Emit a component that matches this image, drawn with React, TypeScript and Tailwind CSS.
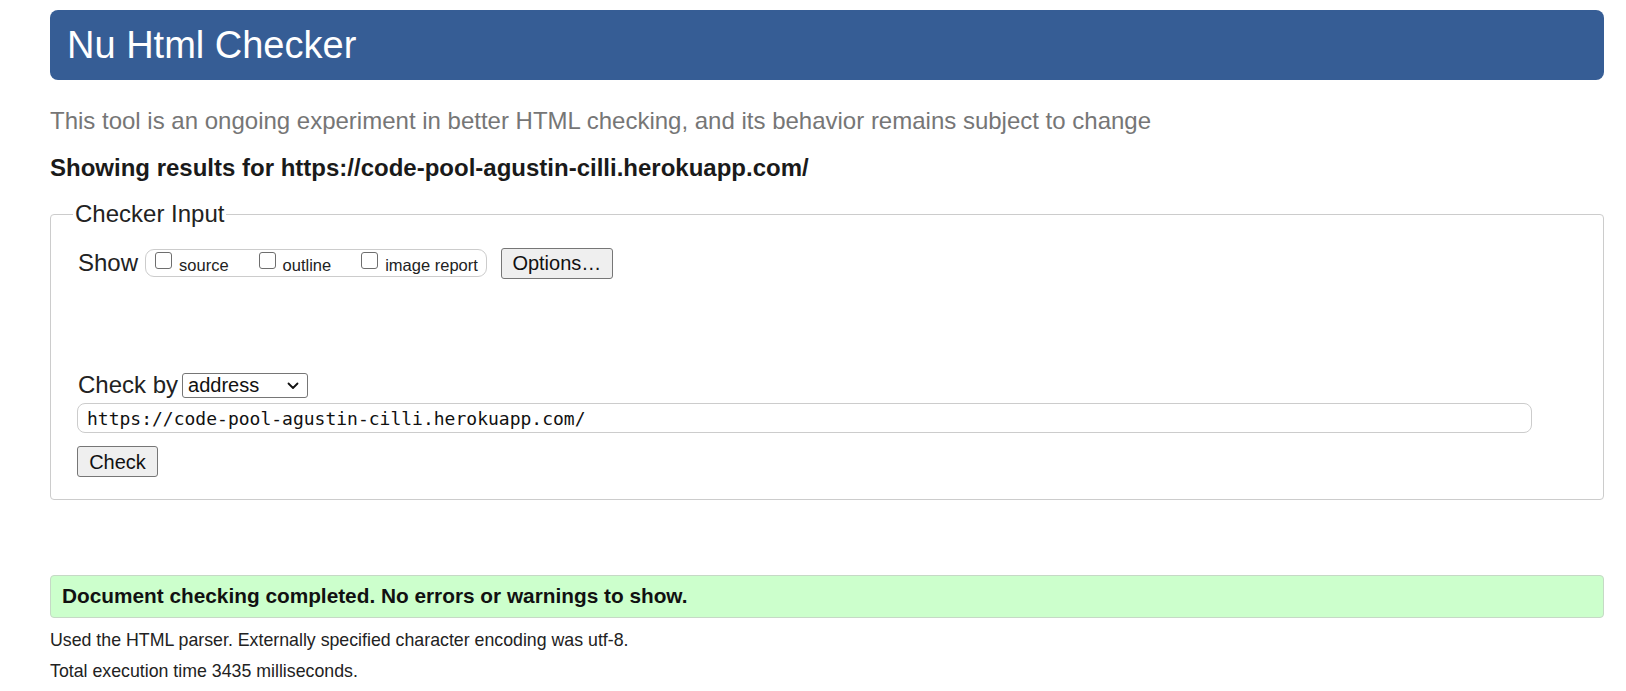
import React from 'react';

const Box: React.FC<{ label: string; gap?: boolean }> = ({ label, gap }) => (
  <label className={`flex items-start ${gap ? 'ml-[30px]' : ''}`}>
    <span className="mt-[1px] w-[17px] h-[17px] rounded-[3px] border-[1.5px] border-[#6e6e6e] bg-white" />
    <span className="ml-[7px] mt-[5px] text-[16.5px] leading-[18px] text-[#222]">{label}</span>
  </label>
);

const App: React.FC = () => {
  return (
    <div className="min-h-screen bg-white pl-[50px] pr-[22px] pt-[10px] font-['Liberation_Sans',Arial,sans-serif] text-[#222]">
      {/* Title bar */}
      <h1 className="h-[70px] rounded-lg bg-[#365d95] pl-[17px] flex items-center text-[38px] leading-none text-white">
        Nu Html Checker
      </h1>

      <p className="mt-[27px] text-[24px] leading-[28px] text-[#767676]">
        This tool is an ongoing experiment in better HTML checking, and its behavior remains subject to change
      </p>

      <p className="mt-[19px] text-[24px] leading-[28px] font-bold text-[#1a1a1a]">
        Showing results for https://code-pool-agustin-cilli.herokuapp.com/
      </p>

      {/* Checker input */}
      <fieldset className="mt-[18px] rounded-[4px] border border-[#cccccc] pl-[26px] pt-[19px] pb-[22px]">
        <legend className="-ml-[4px] px-[2px] text-[24px] leading-[28px] text-[#222]">Checker Input</legend>

        <div className="flex items-center h-[32px]">
          <span className="ml-[1px] text-[24px] leading-[28px]">Show</span>
          <div className="ml-[7px] flex items-start h-[28px] pl-[9px] pr-[8px] pt-[1px] rounded-[9px] border border-[#cccccc]">
            <Box label="source" />
            <Box label="outline" gap />
            <Box label="image report" gap />
          </div>
          <button className="ml-[14px] w-[112px] h-[31px] rounded-[3px] border border-[#767676] bg-[#efefef] text-[20px] leading-none text-[#111]">
            Options…
          </button>
        </div>

        <div className="mt-[92px] flex items-center h-[28px]">
          <span className="ml-[1px] text-[24px] leading-[28px]">Check by</span>
          <span className="relative ml-[4px] inline-flex">
            <select
              defaultValue="address"
              className="appearance-none w-[126px] h-[25px] rounded-[3px] border border-[#767676] bg-white pl-[5px] text-[20px] leading-none text-[#111] outline-none"
            >
              <option value="address">address</option>
              <option value="file">file upload</option>
              <option value="text">text input</option>
            </select>
            <svg
              className="pointer-events-none absolute right-[9px] top-[9px]"
              width="12"
              height="8"
              viewBox="0 0 12 8"
              fill="none"
            >
              <path d="M1.5 1.5 L6 6 L10.5 1.5" stroke="#111" strokeWidth="1.8" strokeLinecap="round" strokeLinejoin="round" />
            </svg>
          </span>
        </div>

        <input
          readOnly
          value="https://code-pool-agustin-cilli.herokuapp.com/"
          className="mt-[4px] block w-[1455px] h-[30px] rounded-[8px] border border-[#cccccc] pl-[9px] font-['DejaVu_Sans_Mono',monospace] text-[18px] text-[#111] outline-none"
        />

        <button className="mt-[13px] block w-[81px] h-[31px] rounded-[3px] border border-[#767676] bg-[#efefef] text-[20px] leading-none text-[#111]">
          Check
        </button>
      </fieldset>

      {/* Result */}
      <div className="mt-[75px] h-[43px] rounded-[4px] border border-[#c6d9c6] bg-[#ccffcc] pl-[11px] flex items-center">
        <p className="text-[20.8px] leading-none font-bold text-[#111]">
          Document checking completed. No errors or warnings to show.
        </p>
      </div>

      <p className="mt-[10px] text-[17.75px] leading-[24px] text-[#222]">
        Used the HTML parser. Externally specified character encoding was utf-8.
      </p>
      <p className="mt-[7px] text-[17.75px] leading-[24px] text-[#222]">Total execution time 3435 milliseconds.</p>
    </div>
  );
};

export default App;
